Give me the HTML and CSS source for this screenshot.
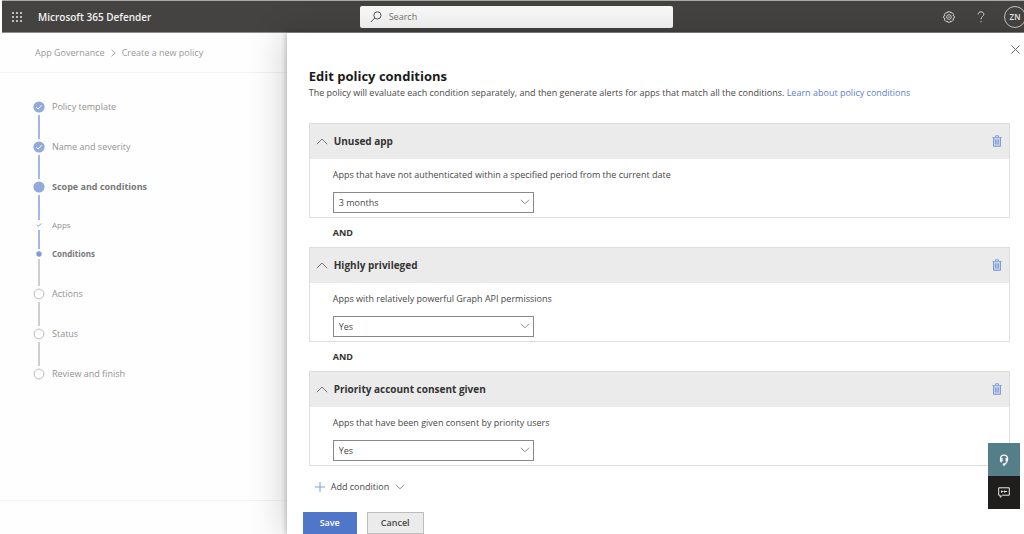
FILE: index.html
```
<!DOCTYPE html>
<html lang="en">
<head>
<meta charset="utf-8">
<title>Microsoft 365 Defender</title>
<link rel="stylesheet" href="styles.css">
</head>
<body>
<header class="topbar">
  <div class="brand">
    <button class="icon-btn" aria-label="App launcher">
      <svg width="12" height="12" viewBox="0 0 12 12" fill="#e6e6e6"><circle cx="2" cy="2" r="1"/><circle cx="6" cy="2" r="1"/><circle cx="10" cy="2" r="1"/><circle cx="2" cy="6" r="1"/><circle cx="6" cy="6" r="1"/><circle cx="10" cy="6" r="1"/><circle cx="2" cy="10" r="1"/><circle cx="6" cy="10" r="1"/><circle cx="10" cy="10" r="1"/></svg>
    </button>
    <span class="product">Microsoft 365 Defender</span>
  </div>
  <label class="search">
    <svg width="12" height="12" viewBox="0 0 12 12" fill="none" stroke="#555" stroke-width="1"><circle cx="7.400" cy="4.400" r="3.600"/><path d="M4.800 7 .8 11"/></svg>
    <input type="search" placeholder="Search" aria-label="Search">
  </label>
  <div class="tools">
    <button class="icon-btn" aria-label="Settings">
      <svg width="12" height="12" viewBox="0 0 12 12" fill="none" stroke="#d2d2d2"><path d="M4.700.8h2.600l.5 1.200 1.300-.4 1.500 1.700-.7 1.100 1.400.7v1.900l-1.400.7.6 1.300-1.500 1.500-1.300-.5-.5 1.200H4.700L4.200 10l-1.300.5L1.400 9 2 7.700.7 7V5.100L2 4.400l-.6-1.200 1.500-1.600 1.300.4z"/><circle cx="6" cy="6" r="2.300"/><circle cx="6" cy="6" r=".8" fill="#d2d2d2" stroke="none"/></svg>
    </button>
    <button class="icon-btn" aria-label="Help">
      <svg width="8" height="12" viewBox="0 0 8 12" fill="none" stroke="#d8d8d8"><path d="M1.200 3.500C1.200 1.700 2.400.8 4 .8s2.800 1 2.800 2.500C6.800 5.300 4 5.600 4 8.300"/><path d="M4 10v1.300"/></svg>
    </button>
    <button class="avatar" aria-label="Account ZN">ZN</button>
  </div>
</header>
<div class="workspace">
  <aside class="sidebar">
    <nav class="crumbs" aria-label="Breadcrumb">
      <a href="#">App Governance</a>
      <svg width="5" height="8" viewBox="0 0 5 8" fill="none" stroke="#aaa"><path d="M.6.6 4.200 4 .6 7.400"/></svg>
      <a href="#">Create a new policy</a>
    </nav>
    <ol class="steps">
      <li class="step done"><span class="marker"><svg width="12" height="12" viewBox="0 0 12 12"><circle cx="6" cy="6" r="5.600" fill="#92a9dc"/><path d="M3.300 6.200 5.200 8 8.700 4.400" fill="none" stroke="#fff"/></svg></span><span class="label">Policy template</span></li>
      <li class="step done"><span class="marker"><svg width="12" height="12" viewBox="0 0 12 12"><circle cx="6" cy="6" r="5.600" fill="#92a9dc"/><path d="M3.300 6.200 5.200 8 8.700 4.400" fill="none" stroke="#fff"/></svg></span><span class="label">Name and severity</span></li>
      <li class="step done before-sub"><span class="marker"><svg width="12" height="12" viewBox="0 0 12 12"><circle cx="6" cy="6" r="5.600" fill="#92a9dc"/></svg></span><strong class="label">Scope and conditions</strong></li>
      <li class="step sub done"><span class="marker"><svg width="6" height="6" viewBox="0 0 6 6" fill="none" stroke="#92a9dc"><path d="M.5 2.800 2.200 4.300 5.500 1.500"/></svg></span><span class="label">Apps</span></li>
      <li class="step sub last-sub"><span class="marker"><svg width="6" height="6" viewBox="0 0 6 6"><circle cx="3" cy="3" r="2.700" fill="#7f9bd8"/></svg></span><strong class="label">Conditions</strong></li>
      <li class="step"><span class="marker"><svg width="12" height="12" viewBox="0 0 12 12"><circle cx="6" cy="6" r="4.900" fill="none" stroke="#bdbdbd"/></svg></span><span class="label">Actions</span></li>
      <li class="step"><span class="marker"><svg width="12" height="12" viewBox="0 0 12 12"><circle cx="6" cy="6" r="4.900" fill="none" stroke="#bdbdbd"/></svg></span><span class="label">Status</span></li>
      <li class="step end"><span class="marker"><svg width="12" height="12" viewBox="0 0 12 12"><circle cx="6" cy="6" r="4.900" fill="none" stroke="#bdbdbd"/></svg></span><span class="label">Review and finish</span></li>
    </ol>
    <div class="sidebar-foot"></div>
  </aside>
  <main class="panel">
    <div class="panel-top">
      <button class="icon-btn" aria-label="Close"><svg width="9" height="9" viewBox="0 0 9 9" stroke="#666" fill="none"><path d="m.5.5 8 8m0-8-8 8"/></svg></button>
    </div>
    <div class="content">
      <h1>Edit policy conditions</h1>
      <p class="intro">The policy will evaluate each condition separately, and then generate alerts for apps that match all the conditions. <a href="#">Learn about policy conditions</a></p>

      <section class="card">
        <div class="card-head">
          <button class="toggle" aria-expanded="true"><svg width="12" height="7" viewBox="0 0 12 7" fill="none" stroke="#777"><path d="M.8 6.200 6 1l5.200 5.200"/></svg>Unused app</button>
          <button class="icon-btn" aria-label="Delete Unused app"><svg width="10" height="12" viewBox="0 0 10 12" fill="none" stroke="#7f9bd6"><path d="M.5 2.500h9M3.500 2.200V.8h3v1.400"/><path d="M1.500 2.700v8.600h7V2.700" fill="#c5d2ee"/><path d="M3.500 4.500v5M5 4.500v5M6.500 4.500v5" stroke-width=".9"/></svg></button>
        </div>
        <div class="card-body">
          <label for="period">Apps that have not authenticated within a specified period from the current date</label>
          <div class="select"><select id="period"><option>3 months</option></select><svg width="10" height="6" viewBox="0 0 10 6" fill="none" stroke="#888"><path d="m1 .8 4 4 4-4"/></svg></div>
        </div>
      </section>
      <div class="joiner">AND</div>
      <section class="card">
        <div class="card-head">
          <button class="toggle" aria-expanded="true"><svg width="12" height="7" viewBox="0 0 12 7" fill="none" stroke="#777"><path d="M.8 6.200 6 1l5.200 5.200"/></svg>Highly privileged</button>
          <button class="icon-btn" aria-label="Delete Highly privileged"><svg width="10" height="12" viewBox="0 0 10 12" fill="none" stroke="#7f9bd6"><path d="M.5 2.500h9M3.500 2.200V.8h3v1.400"/><path d="M1.500 2.700v8.600h7V2.700" fill="#c5d2ee"/><path d="M3.500 4.500v5M5 4.500v5M6.500 4.500v5" stroke-width=".9"/></svg></button>
        </div>
        <div class="card-body">
          <label for="privileged">Apps with relatively powerful Graph API permissions</label>
          <div class="select"><select id="privileged"><option>Yes</option></select><svg width="10" height="6" viewBox="0 0 10 6" fill="none" stroke="#888"><path d="m1 .8 4 4 4-4"/></svg></div>
        </div>
      </section>
      <div class="joiner">AND</div>
      <section class="card">
        <div class="card-head">
          <button class="toggle" aria-expanded="true"><svg width="12" height="7" viewBox="0 0 12 7" fill="none" stroke="#777"><path d="M.8 6.200 6 1l5.200 5.200"/></svg>Priority account consent given</button>
          <button class="icon-btn" aria-label="Delete Priority account consent given"><svg width="10" height="12" viewBox="0 0 10 12" fill="none" stroke="#7f9bd6"><path d="M.5 2.500h9M3.500 2.200V.8h3v1.400"/><path d="M1.500 2.700v8.600h7V2.700" fill="#c5d2ee"/><path d="M3.500 4.500v5M5 4.500v5M6.500 4.500v5" stroke-width=".9"/></svg></button>
        </div>
        <div class="card-body">
          <label for="priority">Apps that have been given consent by priority users</label>
          <div class="select"><select id="priority"><option>Yes</option></select><svg width="10" height="6" viewBox="0 0 10 6" fill="none" stroke="#888"><path d="m1 .8 4 4 4-4"/></svg></div>
        </div>
      </section>
      <button class="add"><svg width="10" height="10" viewBox="0 0 10 10" stroke="#7f9fd6"><path d="M5 0v10M0 5h10"/></svg>Add condition<svg width="10" height="6" viewBox="0 0 10 6" fill="none" stroke="#888"><path d="m1 .8 4 4 4-4"/></svg></button>
    </div>
    <footer class="actions">
      <button class="btn primary">Save</button>
      <button class="btn">Cancel</button>
    </footer>
  </main>
</div>
<div class="floating">
  <button class="help" aria-label="Support"><svg width="10" height="12" viewBox="0 0 10 12" fill="none" stroke="#fff" stroke-width="1.200"><path d="M2.500 8.300C.8 6.500.7 1.200 5 1.200s4.300 5 2.600 7.100L5.800 10.300"/><path d="M2.900 4v3.600M7.300 4v3.600" stroke-width="1.400"/><circle cx="5" cy="10.500" r=".7" fill="#fff"/></svg></button>
  <button class="feedback" aria-label="Feedback"><svg width="12" height="11" viewBox="0 0 12 11" fill="none" stroke="#e8e8e8"><path d="M.7.8h10.600v7.400H4.500L2.200 10.300V8.200H.7z"/><path d="M3.600 3.500v2.200M5.500 4.500H3M6.700 3.500v2.200M9 4.500H6.500"/></svg></button>
</div>
</body>
</html>
```
FILE: styles.css
```
* { box-sizing: border-box; }
body {
  margin: 0;
  min-height: 100vh;
  display: flex;
  flex-direction: column;
  overflow: hidden;
  background: #fff;
  color: #484848;
  font: 9px/12px "Open Sans", "Noto Sans", sans-serif;
}
button, input, select { font: inherit; color: inherit; }
button { border: 0; padding: 0; background: none; }
svg { display: block; flex: none; }
a { color: #5b7fc9; text-decoration: none; }

.topbar {
  display: grid;
  grid-template-columns: 35% min(313px, 40%) 1fr;
  align-items: center;
  height: 33px;
  margin-left: 2px;
  background: #444341;
  border-top: 1px solid #a9aaa8;
  border-bottom: 1px solid #8d8d8c;
}
.brand { display: flex; align-items: center; gap: 15px; padding-left: 9px; }
.product { color: #f2f2f2; font-size: 10px; font-weight: 600; }
.search {
  display: flex;
  align-items: center;
  gap: 7px;
  height: 22px;
  padding: 0 10px;
  border-radius: 2px;
  background: #f8f8f8;
}
.search input { flex: 1; min-width: 0; padding: 0; border: 0; outline: 0; background: none; }
.search input::placeholder { color: #757575; opacity: 1; }
.tools { display: flex; align-items: center; justify-content: flex-end; gap: 14px; margin-right: -2px; }
.tools .icon-btn { display: grid; place-items: center; width: 18px; }
.avatar {
  width: 22px;
  height: 22px;
  border: 1px solid #c4c4c4;
  border-radius: 50%;
  color: #e6e6e6;
  font-size: 8px;
  font-weight: 600;
}

.workspace { flex: 1; display: grid; grid-template-columns: 28% 1fr; }
.sidebar { display: flex; flex-direction: column; color: #8c8c8c; background: #fefefe; }
.crumbs {
  display: flex;
  align-items: center;
  gap: 6px;
  height: 40px;
  padding-left: 35px;
  border-bottom: 1px solid #f3f3f3;
}
.crumbs a { color: #999; }
.steps { list-style: none; margin: 0; padding: 26px 0 0 33px; }
.step { display: flex; gap: 7px; height: 40px; line-height: 16px; }
.marker { display: flex; flex-direction: column; align-items: center; width: 12px; padding-top: 2px; }
.marker::after { content: ""; flex: 1; width: 2px; margin-top: 2px; background: #cfcfcf; }
.done .marker::after { background: #a3b7e2; }
.step .label { color: #929292; }
.step strong.label { color: #777; font-weight: 700; }
.before-sub { height: 41px; }
.sub { height: 29px; line-height: 10px; font-size: 8px; }
.last-sub { height: 37px; }
.end { height: 16px; }
.end .marker::after { display: none; }
.sidebar-foot { height: 34px; margin-top: auto; border-top: 1px solid #f3f3f3; }

.panel {
  position: relative;
  display: flex;
  flex-direction: column;
  background: #fff;
  box-shadow: -1px 0 5px rgba(0, 0, 0, .22), -6px 0 32px rgba(0, 0, 0, .16);
}
.panel-top { display: flex; justify-content: flex-end; height: 34px; padding: 12px 4px 0 0; }
.panel-top .icon-btn { height: 9px; }
.content { padding: 0 14px 0 22px; }
h1 { margin: 0; color: #1b1b1b; font-size: 13px; line-height: 18px; font-weight: 700; }
.intro { margin: 2px 0 24px; }
.card { border: 1px solid #dedede; }
.card-head {
  display: flex;
  align-items: center;
  justify-content: space-between;
  height: 35px;
  padding: 0 7px 1px 6px;
  background: #ebebeb;
}
.toggle { display: flex; align-items: center; gap: 6px; color: #333; font-size: 10px; font-weight: 700; }
.card-body { padding: 10px 23px 4px; }
.card-body label { display: block; margin-bottom: 11px; }
.select { position: relative; max-width: 201px; }
.select select {
  display: block;
  width: 100%;
  height: 21px;
  padding: 0 5px;
  border: 1px solid #888;
  border-radius: 0;
  appearance: none;
  background: #fff;
}
.select svg { position: absolute; right: 4px; top: 7px; pointer-events: none; }
.joiner { padding-left: 24px; line-height: 29px; color: #333; font-weight: 700; }
.add { display: flex; align-items: center; gap: 6px; margin: 14px 0 0 6px; line-height: 14px; }
.actions { display: flex; gap: 10px; margin-top: auto; padding-left: 16px; }
.btn { min-width: 57px; height: 22px; border: 1px solid #bdbdbd; background: #ebebeb; font-weight: 600; }
.primary { min-width: 54px; border-color: #4f76c8; background: #4f76c8; color: #fff; }

.floating { position: fixed; right: 4px; bottom: 25px; display: flex; flex-direction: column; }
.floating button { display: grid; place-items: center; width: 32px; height: 33px; }
.help { background: #547f88; }
.feedback { background: #1f1e1d; }
```
